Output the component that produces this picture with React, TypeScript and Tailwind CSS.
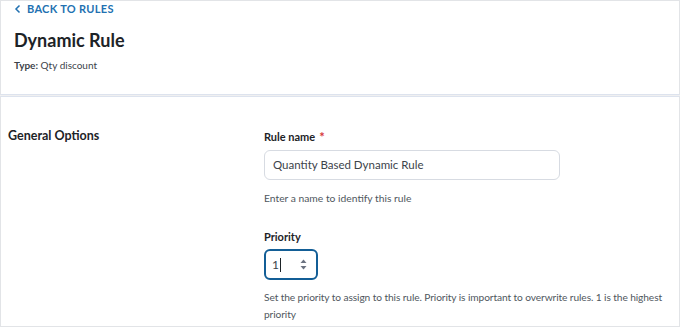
const App = () => {
  return (
    <div className="h-[327px] w-[680px] bg-[#f0f0f1] font-['Lato',sans-serif] text-[#1d2327] flex flex-col gap-[1px]">
      {/* Header panel */}
      <div className="h-[95px] bg-white border border-[#e2e4e7] border-b-[#dde3ee] pl-[13px] pt-[1px]">
        <a href="#" className="flex items-center gap-[5px] text-[#2271b1] text-[11px] font-bold tracking-[0.3px] leading-[14px]">
          <svg width="8" height="10" viewBox="0 0 8 10" fill="none" stroke="currentColor" strokeWidth="1.5">
            <path d="M5.5 1.5 2 5l3.5 3.5" />
          </svg>
          <span>BACK TO RULES</span>
        </a>
        <h1 className="mt-[11px] text-[18px] font-bold leading-[26px]">Dynamic Rule</h1>
        <p className="mt-[5px] text-[10px] leading-[14px] text-[#3c434a]">
          <span className="font-bold">Type:</span> Qty discount
        </p>
      </div>

      {/* Options panel */}
      <div className="flex-1 bg-white border border-[#e2e4e7] border-t-[#dde3ee] flex pt-[30px]">
        <div className="w-[263px] pl-[7px]">
          <h2 className="text-[12.5px] font-bold leading-[18px] text-[#1d2327]">General Options</h2>
        </div>
        <div className="flex-1">
          <label className="flex items-center gap-[4px] text-[11px] font-bold leading-[18px] mt-[1px]">
            Rule name <span className="text-[#d63638] text-[13px] leading-[10px]">*</span>
          </label>
          <div className="mt-[4px] w-[296px] h-[30px] rounded-[6px] border border-[#d7dbe2] flex items-center px-[8px] text-[11.5px] text-[#3c434a]">
            Quantity Based Dynamic Rule
          </div>
          <p className="mt-[11px] text-[10.3px] leading-[14px] text-[#50575e]">Enter a name to identify this rule</p>

          <label className="block mt-[24px] text-[11px] font-bold leading-[16px]">Priority</label>
          <div className="mt-[4px] w-[54px] h-[31px] rounded-[6px] border-2 border-[#135e96] flex items-center pl-[6px] pr-[9px] text-[12px] text-[#3c434a]">
            <span>1</span>
            <span className="ml-[1px] w-[1px] h-[14px] bg-[#1d2327]" />
            <svg className="ml-auto" width="7" height="11" viewBox="0 0 7 11" fill="#6b7280">
              <path d="M3.5 0.5 6.5 4H0.5z" />
              <path d="M3.5 10.5 0.5 7h6z" />
            </svg>
          </div>
          <p className="mt-[9px] max-w-[400px] text-[10.2px] tracking-[-0.1px] leading-[17px] text-[#50575e]">
            Set the priority to assign to this rule. Priority is important to overwrite rules. 1 is the highest priority
          </p>
        </div>
      </div>
    </div>
  );
};

export default App;
